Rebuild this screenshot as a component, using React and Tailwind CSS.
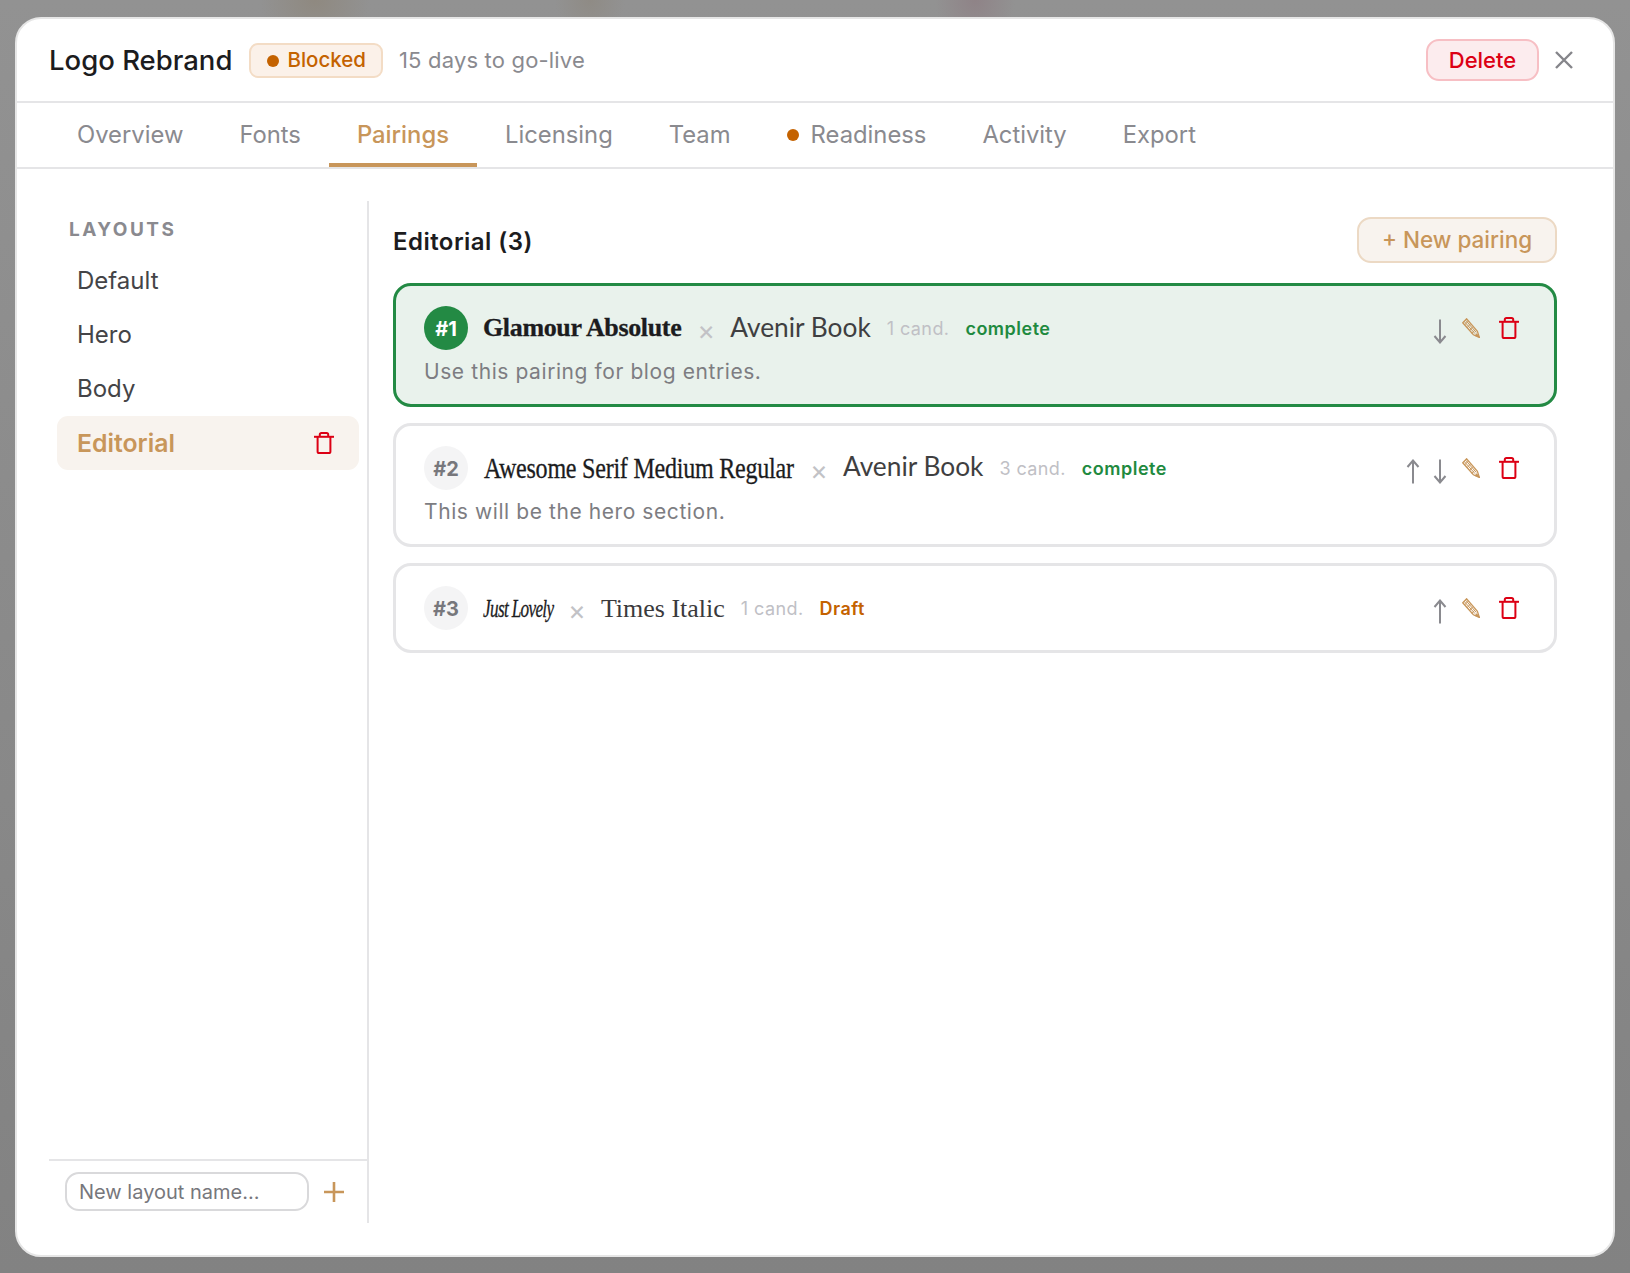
const TrashIcon = ({ className }) => (
  <svg viewBox="0 0 20 22" fill="none" stroke="#dc0014" strokeWidth="2" className={className}>
    <path d="M0 4.8h20" />
    <path d="M5.8 4.8V2.6C5.8 1.6 6.4 1 7.4 1h5.2c1 0 1.6.6 1.6 1.6v2.2" />
    <path d="M3.6 4.8v14.6c0 1 .6 1.6 1.6 1.6h9.6c1 0 1.6-.6 1.6-1.6V4.8" />
  </svg>
);

const PencilIcon = () => (
  <svg viewBox="0 0 18 20" fill="none" stroke="#c8965a" className="w-[18px] h-[20px]">
    <path d="M0.8 4.8 4.6 0.8 15.4 13.4 17.4 19.4 11.4 16.8z" strokeWidth="1.3" />
    <path d="M2.2 3.4 13 15.6M3.6 2.2 14.2 14.4" strokeWidth="1" />
    <path d="M2.6 7 6 3.2M5 9.8 8.4 6M7.4 12.6 10.8 8.8M9.8 15.4 13.2 11.6" strokeWidth="0.9" />
    <path d="M14.8 15.6 17.6 19.6 12.8 17.6z" fill="#c8965a" strokeWidth="0.6" />
  </svg>
);

const UpArrow = () => (
  <svg viewBox="0 0 14 25" fill="none" stroke="#8a8a8f" strokeWidth="2" className="w-[14px] h-[25px]">
    <path d="M7 1.5V24.5" />
    <path d="M1.5 8 7 1.5 12.5 8" />
  </svg>
);

const DownArrow = () => (
  <svg viewBox="0 0 14 25" fill="none" stroke="#8a8a8f" strokeWidth="2" className="w-[14px] h-[25px]">
    <path d="M7 0.5V23.5" />
    <path d="M1.5 17 7 23.5 12.5 17" />
  </svg>
);

const TABS = ["Overview", "Fonts", "Pairings", "Licensing", "Team", "Readiness", "Activity", "Export"];

const PairingCard = ({ num, first, second, cand, status, note, up, down, active }) => {
  return (
    <div
      className={`border-[3px] rounded-[18px] pl-[28px] pr-[35px] pt-[20px] ${note ? "pb-[18px]" : "pb-[20px]"} ${
        active ? "border-[#238a44] bg-[#e9f2ec]" : "border-[#e5e5e7] bg-white"
      }`}
    >
      <div className="flex items-center h-[44px]">
        <div
          className={
            active
              ? "w-[44px] h-[44px] pt-[2px] rounded-full bg-[#238a44] text-white flex items-center justify-center text-[20px] font-bold shrink-0"
              : "w-[44px] h-[44px] pt-[2px] rounded-full bg-[#f4f4f5] text-[#77777c] flex items-center justify-center text-[20px] font-bold shrink-0"
          }
        >
          #{num}
        </div>
        {first}
        <span className="text-[#c2c2c6] text-[27px] leading-none mt-[4px] mr-[15px]">×</span>
        {second}
        <span className="ml-[16px] text-[18px] tracking-[0.4px] text-[#c0c0c5]">{cand} cand.</span>
        <span
          className={
            status === "Draft"
              ? "ml-[16px] text-[18px] font-semibold tracking-[0.5px] text-[#c46200]"
              : "ml-[16px] text-[18px] font-semibold tracking-[0.5px] text-[#1f8a3f]"
          }
        >
          {status}
        </span>
        <div className="ml-auto flex items-center">
          {up && <div className={down ? "mt-[6px] mr-[13px]" : "mt-[6px]"}><UpArrow /></div>}
          {down && <div className="mt-[6px]"><DownArrow /></div>}
          <div className="ml-[15px]"><PencilIcon /></div>
          <div className="ml-[19px]"><TrashIcon className="w-[20px] h-[22px]" /></div>
        </div>
      </div>
      {note && (
        <p className="mt-[8px] text-[21px] leading-[28px] tracking-[0.58px] text-[#7d7d82]">{note}</p>
      )}
    </div>
  );
};

const App = () => {
  return (
    <div className="w-[1630px] h-[1273px] overflow-hidden bg-[radial-gradient(ellipse_55px_50px_at_315px_0,#8f8980,transparent),radial-gradient(ellipse_35px_40px_at_590px_0,#8f8b85,transparent),radial-gradient(ellipse_40px_45px_at_975px_0,#8f8387,transparent),linear-gradient(180deg,#929292_0%,#8a8a8a_50%,#828282_100%)] pt-[17px] pl-[15px] font-[Inter,sans-serif]">
      <div className="w-[1600px] h-[1240px] bg-white rounded-[26px] border-2 border-[#e6e6e6] flex flex-col overflow-hidden">
        {/* header */}
        <div className="h-[84px] shrink-0 flex items-center pl-[32px] pr-[40px] border-b-2 border-[#e5e5e7]">
          <h1 className="text-[27.5px] font-medium text-[#1c1c1e] mt-[2px]">Logo Rebrand</h1>
          <span className="ml-[17px] h-[35px] pl-[16px] pr-[15px] pt-[1px] flex items-center gap-[8px] bg-[#fbf1e9] border-2 border-[#f3dcc5] rounded-[9px] text-[20.5px] font-medium text-[#c46200]">
            <span className="w-[12px] h-[12px] rounded-full bg-[#c46200]" />
            Blocked
          </span>
          <span className="ml-[16px] text-[22px] tracking-[0.18px] text-[#8a8a8f]">15 days to go-live</span>
          <button className="ml-auto w-[113px] h-[42px] bg-[#fcecee] border-2 border-[#f7bfc4] rounded-[13px] text-[22px] font-medium text-[#dc0014]">
            Delete
          </button>
          <svg viewBox="0 0 18 18" fill="none" stroke="#85858a" strokeWidth="2.4" className="ml-[16px] w-[18px] h-[18px]">
            <path d="M1 1l16 16M17 1 1 17" />
          </svg>
        </div>

        {/* tabs */}
        <div className="h-[66px] shrink-0 flex pl-[32px] border-b-2 border-[#e5e5e7]">
          {TABS.map((tab) => (
            <div
              key={tab}
              className={
                tab === "Pairings"
                  ? "px-[28px] flex items-center gap-[12px] text-[23.8px] font-medium text-[#c8965a] border-b-[4px] border-[#c8965a] pt-[4px]"
                  : "px-[28px] flex items-center gap-[12px] text-[23.8px] text-[#8a8a8f] border-b-[4px] border-transparent pt-[4px]"
              }
            >
              {tab === "Readiness" && <span className="w-[12px] h-[12px] rounded-full bg-[#c46200]" />}
              {tab}
            </div>
          ))}
        </div>

        {/* body */}
        <div className="flex-1 min-h-0 flex pt-[32px] pb-[32px] pl-[32px] pr-[56px]">
          <aside className="w-[320px] shrink-0 flex flex-col border-r-2 border-[#e5e5e7]">
            <div className="flex-1 pl-[8px] pr-[8px] pt-[17px]">
              <div className="pl-[12px] text-[19px] leading-[24px] font-bold tracking-[2.45px] text-[#8a8a8f]">LAYOUTS</div>
              <div className="mt-[12px] text-[24px] text-[#444447]">
                <div className="h-[54px] pl-[20px] flex items-center">Default</div>
                <div className="h-[54px] pl-[20px] flex items-center">Hero</div>
                <div className="h-[54px] pl-[20px] flex items-center">Body</div>
                <div className="h-[54px] pl-[20px] pr-[25px] flex items-center justify-between rounded-[11px] bg-[#f8f3ee] font-semibold text-[24.8px] text-[#c8965a]">
                  <span className="mt-[1px]">Editorial</span>
                  <TrashIcon className="w-[20px] h-[22px]" />
                </div>
              </div>
            </div>
            <div className="h-[64px] shrink-0 border-t-2 border-[#e5e5e7] flex items-start pt-[11px] pl-[16px]">
              <input
                placeholder="New layout name..."
                className="w-[244px] h-[39px] px-[12px] rounded-[14px] border-2 border-[#d9d9db] bg-white text-[20px] placeholder:text-[#77777c] outline-none"
              />
              <svg viewBox="0 0 22 22" fill="none" stroke="#c8965a" strokeWidth="2.6" className="ml-[14px] mt-[9px] w-[22px] h-[22px]">
                <path d="M11 1v20M1 11h20" />
              </svg>
            </div>
          </aside>

          <main className="flex-1 min-w-0 pl-[24px]">
            <div className="flex items-center justify-between h-[46px] mt-[16px] mb-[20px]">
              <h2 className="mt-[4px] text-[24px] font-semibold tracking-[0.45px] text-[#1c1c1e]">Editorial (3)</h2>
              <button className="w-[200px] h-[46px] bg-[#f8f3ee] border-2 border-[#ecd9c4] rounded-[14px] text-[22.5px] font-medium text-[#c8965a]">
                + New pairing
              </button>
            </div>
            <div className="flex flex-col gap-[16px]">
              <PairingCard
                active
                num={1}
                down
                cand={1}
                status="complete"
                note="Use this pairing for blog entries."
                first={
                  <span className="ml-[15px] mr-[16px] -mt-[1px] font-['Liberation_Serif',serif] font-bold text-[26px] tracking-[-0.35px] text-[#1c1c1e] [-webkit-text-stroke:0.3px_#1c1c1e]">
                    Glamour Absolute
                  </span>
                }
                second={<span className="font-[Lato,sans-serif] text-[26.3px] text-[#3f3f41]">Avenir Book</span>}
              />
              <PairingCard
                num={2}
                up
                down
                cand={3}
                status="complete"
                note="This will be the hero section."
                first={
                  <span className="ml-[16px] mr-[16px] mt-[2px] w-[310px] shrink-0 whitespace-nowrap origin-left scale-x-[0.83] font-['Liberation_Serif',serif] text-[29px] tracking-[-0.3px] text-[#1c1c1e] [-webkit-text-stroke:0.3px_#1c1c1e]">
                    Awesome Serif Medium Regular
                  </span>
                }
                second={<span className="font-[Lato,sans-serif] text-[26.3px] text-[#3f3f41] -mt-[2px]">Avenir Book</span>}
              />
              <PairingCard
                num={3}
                up
                cand={1}
                status="Draft"
                first={
                  <span className="ml-[15px] mr-[14px] w-[71px] shrink-0 whitespace-nowrap origin-left scale-x-[0.66] font-['Liberation_Serif',serif] italic text-[26px] tracking-[-1px] text-[#1c1c1e] [-webkit-text-stroke:0.3px_#1c1c1e]">
                    Just Lovely
                  </span>
                }
                second={<span className="font-['Liberation_Serif',serif] text-[26px] text-[#3a3a3c]">Times Italic</span>}
              />
            </div>
          </main>
        </div>
      </div>
    </div>
  );
};

export default App;
